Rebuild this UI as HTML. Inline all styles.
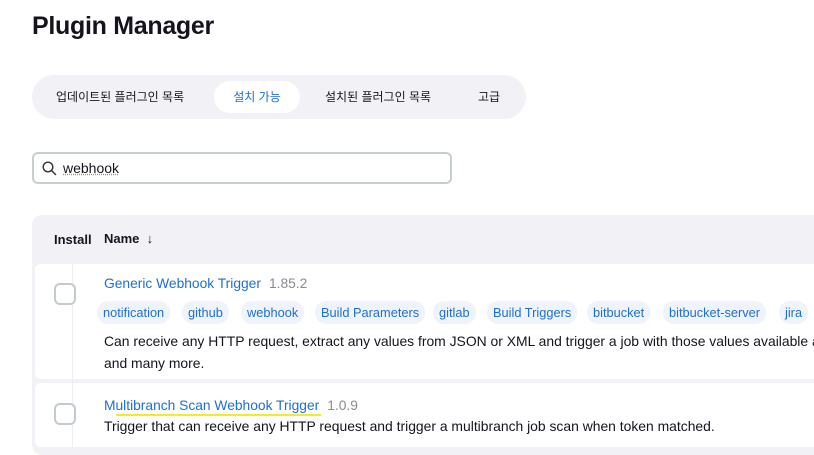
<!DOCTYPE html>
<html><head><meta charset="utf-8"><style>
*{margin:0;padding:0;box-sizing:border-box}
body{width:814px;height:450px;overflow:hidden;background:#fff;font-family:"Liberation Sans","Noto Sans CJK KR",sans-serif;color:#14141f;position:relative}
.a{position:absolute;white-space:nowrap}
h1{position:absolute;left:32px;top:12px;font-size:25px;font-weight:bold;letter-spacing:-0.3px}
.tabs{position:absolute;left:32px;top:75px;width:494px;height:44px;border-radius:22px;background:#f2f2f6}
.tab{position:absolute;top:6px;height:32px;line-height:32px;font-size:12px;color:#14141f}
.sel{background:#fff;border-radius:16px;color:#1f6fd0;left:182px;width:86px;text-align:center}
.search{position:absolute;left:32px;top:152px;width:420px;height:32px;border:2px solid #c6ced2;border-radius:6px}
.table{position:absolute;left:32px;top:215px;width:800px;height:240px;background:#f2f2f6;border-radius:10px}
.row{position:absolute;left:35px;width:800px;background:#fff;border-radius:6px 0 0 6px}
.cb{position:absolute;width:22px;height:22px;border:2px solid #c4cbcf;border-radius:6px;background:#fff}
.link{color:#1f6fd0;font-size:13.8px}
.ver{color:#8a8a92;font-size:13.8px;margin-left:8px}
.tag{position:absolute;top:301px;height:23px;line-height:23px;padding:0 6px;border-radius:11px;background:#eef3fc;color:#1f6fd0;font-size:12.8px}
.desc{font-size:13.9px;color:#14141f}
</style></head><body>
<h1>Plugin Manager</h1>
<div class="tabs">
<div class="tab" style="left:24px">업데이트된 플러그인 목록</div>
<div class="tab sel">설치 가능</div>
<div class="tab" style="left:293px">설치된 플러그인 목록</div>
<div class="tab" style="left:446px">고급</div>
</div>
<div class="search">
<svg style="position:absolute;left:8px;top:7px" width="15" height="15" viewBox="0 0 15 15"><circle cx="6" cy="6" r="4.8" fill="none" stroke="#333" stroke-width="1.4"/><path d="M9.5 9.5L13.5 13.5" stroke="#333" stroke-width="1.5" stroke-linecap="round"/></svg>
<span class="a" style="left:29px;top:6px;font-size:14px;text-decoration:underline dotted #e87070">webhook</span>
</div>
<div class="table"></div>
<div class="a" style="left:54px;top:232px;font-size:13px;font-weight:bold">Install</div>
<div class="a" style="left:104px;top:231px;font-size:13px;font-weight:bold">Name&nbsp; ↓</div>
<div class="row" style="top:264px;height:115px"></div>
<div class="row" style="top:383px;height:64px"></div>
<div class="a" style="left:72px;top:264px;width:1px;height:183px;background:#eeeef2"></div>
<div class="cb" style="left:54px;top:283px"></div>
<div class="cb" style="left:54px;top:403px"></div>
<div class="a" style="left:104px;top:275px"><span class="link">Generic Webhook Trigger</span><span class="ver">1.85.2</span></div>
<div class="tag" style="left:97px">notification</div>
<div class="tag" style="left:182px">github</div>
<div class="tag" style="left:241px">webhook</div>
<div class="tag" style="left:315px">Build Parameters</div>
<div class="tag" style="left:433px">gitlab</div>
<div class="tag" style="left:487px">Build Triggers</div>
<div class="tag" style="left:587px">bitbucket</div>
<div class="tag" style="left:663px">bitbucket-server</div>
<div class="tag" style="left:779px">jira</div>
<div class="a desc" style="left:104px;top:333px">Can receive any HTTP request, extract any values from JSON or XML and trigger a job with those values available as</div>
<div class="a desc" style="left:104px;top:355px">and many more.</div>
<div class="a" style="left:104px;top:397px"><span class="link">Multibranch Scan Webhook Trigger</span><span class="ver">1.0.9</span></div>
<div class="a" style="left:116px;top:414px;width:205px;height:2px;background:#f4ea2a"></div>
<div class="a desc" style="left:104px;top:418px">Trigger that can receive any HTTP request and trigger a multibranch job scan when token matched.</div>
</body></html>
